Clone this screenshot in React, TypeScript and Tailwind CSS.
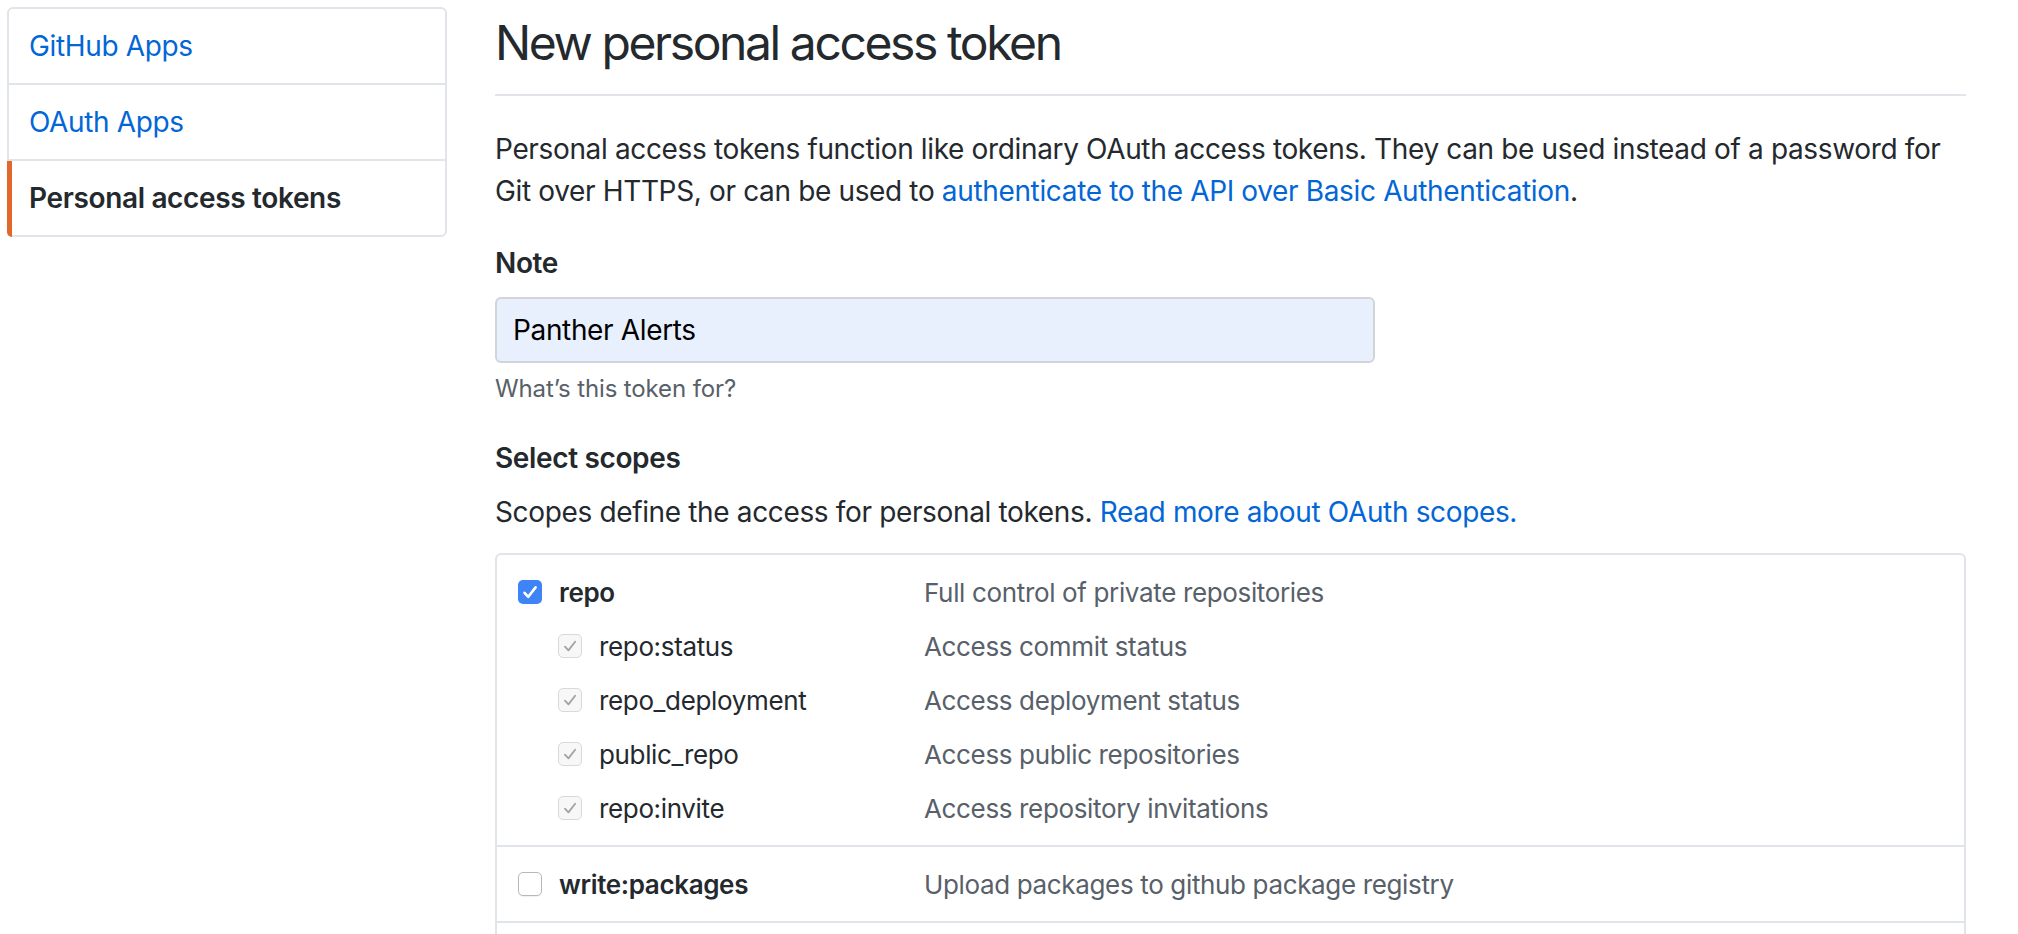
import React from "react";

const Check = ({ color, w }: { color: string; w: number }) => (
  <svg viewBox="0 0 24 24" className="h-full w-full" fill="none">
    <path
      d="M6.5 12.8 L10.3 16.8 L17.6 7.4"
      stroke={color}
      strokeWidth={w}
      strokeLinecap="round"
      strokeLinejoin="round"
    />
  </svg>
);

type Box = "checked" | "disabled" | "empty";

const CheckBox = ({ state }: { state: Box }) => {
  if (state === "checked")
    return (
      <span className="flex h-[24px] w-[24px] shrink-0 items-center justify-center rounded-[5px] bg-[#3e84f7]">
        <Check color="#ffffff" w={2.6} />
      </span>
    );
  if (state === "disabled")
    return (
      <span className="flex h-[24px] w-[24px] shrink-0 items-center justify-center rounded-[5px] border-[1.5px] border-[#d9d9d9] bg-[#f7f7f7]">
        <Check color="#a3a3a3" w={2} />
      </span>
    );
  return (
    <span className="flex h-[24px] w-[24px] shrink-0 rounded-[5px] border-[1.5px] border-[#b8b8b8] bg-white shadow-[0_1px_1px_rgba(0,0,0,0.06)]" />
  );
};

type Row = { name: string; desc: string; sub?: boolean; state: Box };

const groups: Row[][] = [
  [
    { name: "repo", desc: "Full control of private repositories", state: "checked" },
    { name: "repo:status", desc: "Access commit status", sub: true, state: "disabled" },
    { name: "repo_deployment", desc: "Access deployment status", sub: true, state: "disabled" },
    { name: "public_repo", desc: "Access public repositories", sub: true, state: "disabled" },
    { name: "repo:invite", desc: "Access repository invitations", sub: true, state: "disabled" },
  ],
  [{ name: "write:packages", desc: "Upload packages to github package registry", state: "empty" }],
  [{ name: "read:packages", desc: "Download packages from github package registry", state: "empty" }],
];

export default function App() {
  return (
    <div className="min-h-screen bg-white font-['Inter','Liberation_Sans',sans-serif] text-[#24292e] tracking-[-0.022em]">
      <div className="flex pl-[7px] pt-[6px]">
        {/* Sidebar */}
        <nav className="mt-[1px] w-[440px] shrink-0 self-start rounded-[6px] border-2 border-[#e1e4e8]">
          <div className="border-b-2 border-[#e1e4e8] px-[20px] py-[16px] text-[28px] leading-[42px] text-[#0366d6]">
            GitHub Apps
          </div>
          <div className="border-b-2 border-[#e1e4e8] px-[20px] py-[16px] text-[28px] leading-[42px] text-[#0366d6]">
            OAuth Apps
          </div>
          <div className="relative px-[20px] py-[16px] text-[28px] font-semibold leading-[42px] text-[#24292e]">
            <span className="absolute bottom-[-2px] left-[-2px] top-0 w-[5px] rounded-bl-[6px] bg-[#e1672b]" />
            Personal access tokens
          </div>
        </nav>

        {/* Main */}
        <main className="ml-[48px] w-[1471px]">
          <h2 className="mb-[32px] border-b-2 border-[#e1e4e8] pb-[16px] pt-[2px] text-[48px] font-normal leading-[70px] tracking-[-0.05em]">
            New personal access token
          </h2>

          <p className="mb-[30px] whitespace-nowrap text-[28px] leading-[42px]">
            Personal access tokens function like ordinary OAuth access tokens. They can be used instead of a password for
            <br />
            Git over HTTPS, or can be used to{" "}
            <span className="text-[#0366d6]">authenticate to the API over Basic Authentication</span>.
          </p>

          <div className="mb-[30px]">
            <div className="mb-[13px] text-[28px] font-semibold leading-[42px]">Note</div>
            <div className="flex h-[66px] w-[880px] items-center rounded-[6px] border-2 border-[#d1d5da] bg-[#e8f0fe] px-[16px] text-[28px] text-black">
              Panther Alerts
            </div>
            <div className="mt-[8px] text-[24px] leading-[36px] tracking-[-0.005em] text-[#586069]">
              What’s this token for?
            </div>
          </div>

          <div>
            <div className="mb-[12px] text-[28px] font-semibold leading-[42px]">Select scopes</div>
            <p className="mb-[20px] text-[28px] leading-[42px]">
              Scopes define the access for personal tokens.{" "}
              <span className="text-[#0366d6]">Read more about OAuth scopes.</span>
            </p>

            <div className="rounded-[6px] border-2 border-[#e1e4e8]">
              {groups.map((g, gi) => (
                <div
                  key={gi}
                  className={
                    gi < groups.length - 1
                      ? "border-b-2 border-[#e1e4e8] py-[10px] pl-[21px]"
                      : "py-[10px] pl-[21px]"
                  }
                >
                  {g.map((r) => (
                    <div key={r.name} className="flex h-[54px] items-center text-[26px]">
                      <div className={r.sub ? "flex w-[406px] items-center pl-[40px]" : "flex w-[406px] items-center"}>
                        <CheckBox state={r.state} />
                        <span className={r.sub ? "ml-[17px] text-[#24292e]" : "ml-[17px] font-semibold text-[#24292e]"}>
                          {r.name}
                        </span>
                      </div>
                      <span className="text-[#586069]">{r.desc}</span>
                    </div>
                  ))}
                </div>
              ))}
            </div>
          </div>
        </main>
      </div>
    </div>
  );
}
